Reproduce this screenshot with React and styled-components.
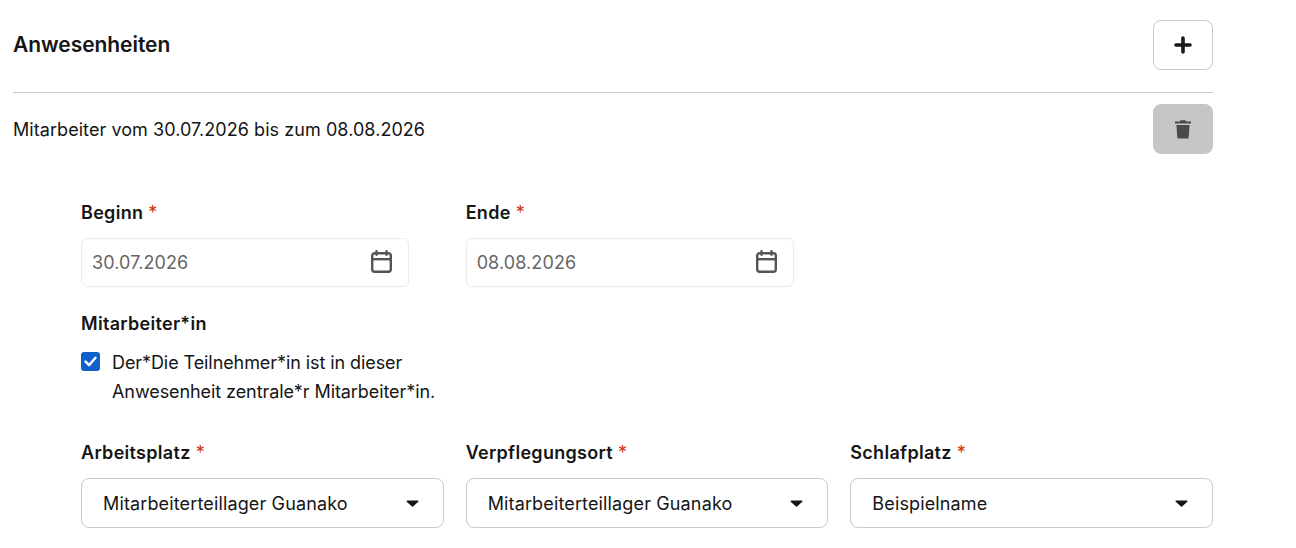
import React from 'react';
import styled, { createGlobalStyle } from 'styled-components';

const GlobalStyle = createGlobalStyle`
  html, body {
    margin: 0;
    padding: 0;
    background: #fff;
    overflow: hidden;
  }
  body {
    font-family: Inter, "Open Sans", sans-serif;
    color: #151515;
  }
`;

const Page = styled.div`
  width: 1200px;
  margin-left: 13px;
  padding-top: 20px;
`;

const Header = styled.div`
  display: flex;
  align-items: center;
  justify-content: space-between;
  height: 50px;
  padding-bottom: 22px;
  border-bottom: 1px solid #c9c9c9;
`;

const Title = styled.h2`
  margin: 0 0 2px;
  font-size: 21px;
  font-weight: 600;
  letter-spacing: -0.05px;
`;

const IconButton = styled.button`
  display: flex;
  align-items: center;
  justify-content: center;
  width: 60px;
  height: 50px;
  padding: 0;
  border-radius: 8px;
  border: 1px solid ${p => (p.$disabled ? '#c6c6c6' : '#c9c9c9')};
  background: ${p => (p.$disabled ? '#c6c6c6' : '#fff')};
`;

const EntryRow = styled.div`
  display: flex;
  align-items: center;
  justify-content: space-between;
  margin-top: 11px;
`;

const EntryText = styled.span`
  font-size: 18px;
  letter-spacing: 0.06px;
`;

const Form = styled.div`
  margin-top: 47px;
  margin-left: 68px;
`;

const Grid = styled.div`
  display: grid;
  grid-template-columns: repeat(3, 1fr);
  column-gap: 22px;
`;

const Field = styled.div`
  display: flex;
  flex-direction: column;
`;

const Label = styled.label`
  display: block;
  padding-top: 1px;
  font-size: 18px;
  font-weight: 600;
  line-height: 22px;
  letter-spacing: 0.3px;
`;

const Required = styled.span`
  color: #c9350b;
  font-size: 18px;
  font-weight: 400;
  margin-left: 5px;
`;

const DateBox = styled.div`
  display: flex;
  align-items: center;
  justify-content: space-between;
  box-sizing: border-box;
  width: 328px;
  height: 49px;
  margin-top: 14px;
  padding: 0 16px 0 10px;
  border: 1px solid #ebebeb;
  border-radius: 6px;
  font-size: 18px;
  letter-spacing: 0.1px;
  color: #666;
`;

const CheckSection = styled.div`
  margin-top: 25px;
`;

const CheckRow = styled.div`
  display: flex;
  align-items: flex-start;
  gap: 12px;
  margin-top: 13px;
`;

const CheckBox = styled.span`
  display: flex;
  align-items: center;
  justify-content: center;
  flex: none;
  width: 19px;
  height: 19px;
  margin-top: 4px;
  border-radius: 3px;
  background: #0f62c9;
`;

const CheckText = styled.div`
  width: 340px;
  font-size: 18px;
  line-height: 29px;
  letter-spacing: -0.08px;
`;

const SelectGrid = styled(Grid)`
  margin-top: 35px;
`;

const SelectBox = styled.div`
  display: flex;
  align-items: center;
  justify-content: space-between;
  box-sizing: border-box;
  height: 50px;
  margin-top: 14px;
  padding: 0 24px 0 21px;
  border: 1px solid #c9c9c9;
  border-radius: 8px;
  font-size: 18px;
  letter-spacing: 0.14px;
`;

const Caret = () => (
  <svg width="13" height="7" viewBox="0 0 14 8">
    <path d="M1 0.5h12c.8 0 1.2.9.6 1.5L7.6 7.4a.9.9 0 0 1-1.2 0L.4 2C-.2 1.4.2.5 1 .5z" fill="#151515" />
  </svg>
);

const PlusIcon = () => (
  <svg width="18" height="18" viewBox="0 0 18 18">
    <path d="M9 2v14M2 9h14" stroke="#1a1a1a" strokeWidth="3.6" strokeLinecap="round" />
  </svg>
);

const TrashIcon = () => (
  <svg width="18" height="20" viewBox="0 0 18 20">
    <path d="M6.5 1.2h5l.6 1.3H17v2H1v-2h4.9z" fill="#4a4a4a" />
    <path d="M2.4 6h13.2l-.9 12.2c0 .8-.7 1.4-1.5 1.4H4.8c-.8 0-1.5-.6-1.5-1.4z" fill="#4a4a4a" />
  </svg>
);

const CalendarIcon = () => (
  <svg width="21" height="23" viewBox="0 0 21 23" fill="none" style={{ marginTop: -2 }}>
    <path d="M5.5 1v4M15.5 1v4" stroke="#555" strokeWidth="2.2" strokeLinecap="round" />
    <rect x="1.2" y="3.2" width="18.6" height="18.6" rx="2.5" stroke="#555" strokeWidth="2.4" />
    <path d="M1 9.2h19" stroke="#555" strokeWidth="2.4" />
  </svg>
);

const CheckIcon = () => (
  <svg width="13" height="11" viewBox="0 0 13 11" fill="none">
    <path d="M1.5 5.5l3.6 3.6L11.5 1.8" stroke="#fff" strokeWidth="2.4" strokeLinecap="round" strokeLinejoin="round" />
  </svg>
);

const DATES = [
  { label: 'Beginn', value: '30.07.2026' },
  { label: 'Ende', value: '08.08.2026' },
];

const SELECTS = [
  { label: 'Arbeitsplatz', value: 'Mitarbeiterteillager Guanako' },
  { label: 'Verpflegungsort', value: 'Mitarbeiterteillager Guanako' },
  { label: 'Schlafplatz', value: 'Beispielname' },
];

export default function App() {
  return (
    <Page>
      <GlobalStyle />
      <Header>
        <Title>Anwesenheiten</Title>
        <IconButton aria-label="Hinzufügen"><PlusIcon /></IconButton>
      </Header>
      <EntryRow>
        <EntryText>Mitarbeiter vom 30.07.2026 bis zum 08.08.2026</EntryText>
        <IconButton $disabled aria-label="Löschen"><TrashIcon /></IconButton>
      </EntryRow>
      <Form>
        <Grid>
          {DATES.map(d => (
            <Field key={d.label}>
              <Label>{d.label}<Required>*</Required></Label>
              <DateBox>{d.value}<CalendarIcon /></DateBox>
            </Field>
          ))}
        </Grid>
        <CheckSection>
          <Label>Mitarbeiter*in</Label>
          <CheckRow>
            <CheckBox><CheckIcon /></CheckBox>
            <CheckText>Der*Die Teilnehmer*in ist in dieser Anwesenheit zentrale*r Mitarbeiter*in.</CheckText>
          </CheckRow>
        </CheckSection>
        <SelectGrid>
          {SELECTS.map(s => (
            <Field key={s.label}>
              <Label>{s.label}<Required>*</Required></Label>
              <SelectBox>{s.value}<Caret /></SelectBox>
            </Field>
          ))}
        </SelectGrid>
      </Form>
    </Page>
  );
}
